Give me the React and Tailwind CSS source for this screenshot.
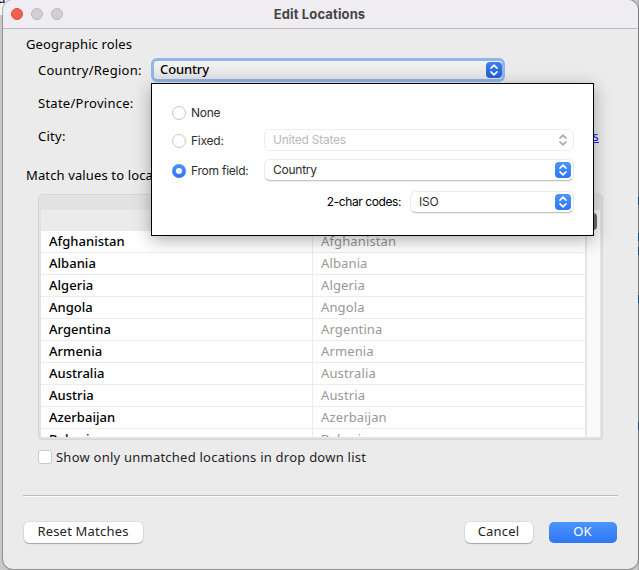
import React, { useState } from "react";
import clsx from "clsx";

const COUNTRIES = [
  "Afghanistan",
  "Albania",
  "Algeria",
  "Angola",
  "Argentina",
  "Armenia",
  "Australia",
  "Austria",
  "Azerbaijan",
  "Bahrain",
];

function Chevrons({ className }) {
  return (
    <svg viewBox="0 0 16 16" className={clsx("h-4 w-4 shrink-0", className)} fill="none" stroke="currentColor" strokeWidth="1.6" strokeLinecap="round" strokeLinejoin="round">
      <path d="M5 6.1 8 3.2l3 2.9M5 9.9l3 2.9 3-2.9" />
    </svg>
  );
}

function Popup({ value, disabled, className }) {
  return (
    <div
      className={clsx(
        "flex h-[22px] items-center justify-between rounded-[6px] border border-[#ececec] bg-white pr-0.5 pl-2",
        disabled ? "text-[#bababa]" : "border-b-[#c4c4c4] text-[#2e2e2e] shadow-[0_0.5px_0.5px_rgba(0,0,0,0.12)]",
        className
      )}
    >
      <span>{value}</span>
      <Chevrons className={disabled ? "text-[#a9a9a9]" : "rounded-[4px] bg-gradient-to-b from-[#4c95fb] to-[#2e76f3] text-white"} />
    </div>
  );
}

function Radio({ label, checked, onSelect }) {
  return (
    <button type="button" onClick={onSelect} className="flex h-6 w-[92px] items-center gap-[5px] text-left">
      <span
        className={clsx(
          "flex h-3.5 w-3.5 shrink-0 items-center justify-center rounded-full",
          checked ? "bg-gradient-to-b from-[#4c95fb] to-[#2e76f3]" : "border border-[#c6c6c6] bg-white"
        )}
      >
        {checked && <span className="h-1.5 w-1.5 rounded-full bg-white" />}
      </span>
      <span>{label}</span>
    </button>
  );
}

function RolePopover() {
  const [mode, setMode] = useState("field");

  return (
    <div className="absolute top-[25px] left-0 z-10 h-[153px] w-[443px] border border-black bg-white pt-[17px] pl-5 font-[Inter,sans-serif] text-[12px] tracking-[-0.02em] text-[#2e2e2e] shadow-[0_4px_16px_rgba(0,0,0,0.32)]">
      <div className="flex h-6 items-start">
        <Radio label="None" checked={mode === "none"} onSelect={() => setMode("none")} />
      </div>
      <div className="mt-1 flex h-6 items-start">
        <Radio label="Fixed:" checked={mode === "fixed"} onSelect={() => setMode("fixed")} />
        <Popup value="United States" disabled className="w-[310px]" />
      </div>
      <div className="mt-1.5 flex h-6 items-start">
        <Radio label="From field:" checked={mode === "field"} onSelect={() => setMode("field")} />
        <Popup value="Country" className="w-[310px]" />
      </div>
      <div className="mt-2 flex h-[22px] w-[402px] items-center justify-end gap-[9px]">
        <span className="tracking-[-0.035em] text-black">2-char codes:</span>
        <Popup value="ISO" className="w-[164px]" />
      </div>
    </div>
  );
}

function DialogButton({ children, primary, className }) {
  return (
    <button
      type="button"
      className={clsx(
        "h-[21px] rounded-[5px] pr-px pb-[3px] leading-[18px] tracking-[0.015em]",
        primary
          ? "bg-gradient-to-b from-[#4c95fb] to-[#2f76f5] text-white"
          : "bg-white text-[#242424] shadow-[0_0_0_0.5px_rgba(0,0,0,0.12),0_1px_1px_rgba(0,0,0,0.25)]",
        className
      )}
    >
      {children}
    </button>
  );
}

export default function App() {
  const [unmatchedOnly, setUnmatchedOnly] = useState(false);

  return (
    <div className="relative h-[570px] w-[639px] overflow-hidden bg-[#c9c9c9] pl-[3px] font-['Noto_Sans',sans-serif] text-[13px] text-black">
      {/* slivers of the window behind the dialog */}
      <div className="absolute top-0 left-0 h-[15px] w-5 overflow-hidden bg-[#f4f4f4] text-[12px] leading-none">
        <span className="relative -top-[7px] -left-[2px]">d</span>
      </div>
      <div className="absolute top-0 right-0 h-full w-px bg-[#a9a9a9]">
        <div className="mt-[197px] h-2 bg-[#2b6599]" />
        <div className="mt-7 h-2 bg-[#2b6599]" />
        <div className="mt-1.5 h-2 bg-[#2b6599]" />
        <div className="mt-10 h-2 bg-[#2b6599]" />
        <div className="mt-[119px] h-2 bg-[#2b6599]" />
      </div>

      <div className="relative flex h-[569px] w-[635px] flex-col overflow-hidden rounded-[10px] bg-[#ebebeb] shadow-[0_0_0_1px_rgba(0,0,0,0.28)]">
        <header className="relative flex h-[29px] shrink-0 items-center justify-center border-b border-[#bfbdc2] bg-[#f0edf2] pr-0.5 font-[Inter,sans-serif] text-[13px] font-bold tracking-[0.01em] text-[#464547]">
          <div className="absolute left-2 flex gap-2">
            <span className="h-3 w-3 rounded-full border border-[#d9503f] bg-[#f05f50]" />
            <span className="h-3 w-3 rounded-full border border-[#bab8bd] bg-[#d1cfd4]" />
            <span className="h-3 w-3 rounded-full border border-[#bab8bd] bg-[#d1cfd4]" />
          </div>
          <span className="pt-px">Edit Locations</span>
        </header>

        <main className="flex-1 pt-[5px] pr-5 pl-[23px]">
          <h2 className="h-[20px] leading-[20px] tracking-[0.01em]">Geographic roles</h2>

          <div className="mt-1 flex h-6">
            <span className="w-[125px] shrink-0 pl-3 leading-[24px] tracking-[0.02em]">Country/Region:</span>
            <div className="relative h-6">
              <div className="flex h-6 w-[354px] items-center justify-between rounded-[6px] border-[3px] border-[#8fb4ee] bg-gradient-to-b from-[#f3f3f3] to-[#e4e4e4] pl-[6px] font-medium">
                <span className="tracking-[-0.01em]">Country</span>
                <Chevrons className="rounded-[4px] bg-gradient-to-b from-[#3c80ea] to-[#215fd9] text-white" />
              </div>
              <RolePopover />
            </div>
          </div>

          <div className="mt-[9px] h-6 pl-3 leading-[24px] tracking-[0.02em]">State/Province:</div>
          <div className="mt-[9px] flex h-6 justify-between pr-[19px] pl-3 leading-[24px] tracking-[0.02em]">
            <span>City:</span>
            <a className="text-[#2419e8] underline">Edit locations</a>
          </div>

          <h2 className="mt-[15px] h-6 leading-[24px] tracking-[0.01em]">Match values to locations</h2>

          <div className="mt-[7px] ml-3 h-[246px] w-[565px] rounded-[4px] border border-[#d6d6d6] bg-[#e2e2e2] px-0.5 pt-[15px] pb-0.5">
            <div className="flex h-[227px] overflow-hidden bg-white">
              <div className="w-[544px]">
                <div className="h-[21px] bg-[#ebebeb]" />
                {COUNTRIES.map((name) => (
                  <div key={name} className="flex h-[22px] border-b border-[#ececec] leading-[21px]">
                    <span className="w-[272px] border-r border-[#ececec] pl-2 font-medium tracking-[0.003em]">{name}</span>
                    <span className="pl-2 tracking-[0.01em] text-[#989898]">{name}</span>
                  </div>
                ))}
              </div>
              <div className="w-[15px] border-l-2 border-[#e6e6e6] bg-[#fafafa] pt-[3px]">
                <div className="ml-0.5 h-[17px] w-2 rounded-full bg-[#6f6f6f]" />
              </div>
            </div>
          </div>

          <label className="mt-[7px] ml-3 flex h-5 items-center gap-1 text-[#1f1f1f]">
            <input
              type="checkbox"
              checked={unmatchedOnly}
              onChange={(e) => setUnmatchedOnly(e.target.checked)}
              className="h-3.5 w-3.5 appearance-none rounded-[3px] border border-[#c9c9c9] bg-white checked:bg-[#2f76f5]"
            />
            <span className="pt-px tracking-[0.018em]">Show only unmatched locations in drop down list</span>
          </label>

          <div className="mt-7 -ml-[3px] h-0.5 w-[595px] border-t border-b border-t-[#bcbcbc] border-b-[#fbfbfb]" />

          <footer className="mt-[25px] -ml-[2px] flex pr-px">
            <DialogButton className="w-[119px]">Reset Matches</DialogButton>
            <DialogButton className="ml-auto w-[68px]">Cancel</DialogButton>
            <DialogButton primary className="ml-4 w-[68px]">OK</DialogButton>
          </footer>
        </main>
      </div>
    </div>
  );
}
